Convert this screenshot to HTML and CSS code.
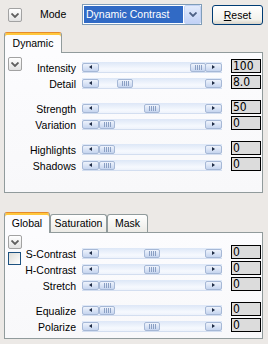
FILE: index.html
```html
<!DOCTYPE html>
<html lang="en">
<head>
    <meta charset="UTF-8">
    <meta name="viewport" content="width=device-width, initial-scale=1.0">
    <title>Dynamic Contrast</title>
    <link rel="stylesheet" href="styles.css">
</head>
<body>
    <div class="topbar">
        <span class="fold"><svg width="8" height="5" viewBox="0 0 8 5"><path d="M0.5 0.5 L4 4 L7.5 0.5" fill="none" stroke="#5f5f5f" stroke-width="1.8"/></svg></span>
        <span class="mode-label">Mode</span>
        <div class="combo">
            <span class="combo-value">Dynamic Contrast</span>
            <span class="combo-arrow"><svg width="8" height="5" viewBox="0 0 8 5"><path d="M0.5 0.5 L4 4 L7.5 0.5" fill="none" stroke="#4d6185" stroke-width="1.8"/></svg></span>
        </div>
        <span class="reset"><u>R</u>eset</span>
    </div>

    <div class="tabs">
        <div class="tab active tab-dynamic">Dynamic</div>
    </div>
    <div class="panel panel-dynamic">
        <div class="side">
            <span class="fold"><svg width="8" height="5" viewBox="0 0 8 5"><path d="M0.5 0.5 L4 4 L7.5 0.5" fill="none" stroke="#5f5f5f" stroke-width="1.8"/></svg></span>
        </div>
        <div class="rows">
            <div class="row">
                <span class="label">Intensity</span>
                <div class="slider"><span class="step left"></span><span class="track"><span class="thumb" style="left: 91px"></span></span><span class="step right"></span></div>
                <span class="value">100</span>
            </div>
            <div class="row">
                <span class="label">Detail</span>
                <div class="slider"><span class="step left"></span><span class="track"><span class="thumb" style="left: 18px"></span></span><span class="step right"></span></div>
                <span class="value">8.0</span>
            </div>
            <div class="row gap">
                <span class="label">Strength</span>
                <div class="slider"><span class="step left"></span><span class="track"><span class="thumb" style="left: 45px"></span></span><span class="step right"></span></div>
                <span class="value">50</span>
            </div>
            <div class="row">
                <span class="label">Variation</span>
                <div class="slider"><span class="step left"></span><span class="track"><span class="thumb" style="left: 0px"></span></span><span class="step right"></span></div>
                <span class="value">0</span>
            </div>
            <div class="row gap">
                <span class="label">Highlights</span>
                <div class="slider"><span class="step left"></span><span class="track"><span class="thumb" style="left: 0px"></span></span><span class="step right"></span></div>
                <span class="value">0</span>
            </div>
            <div class="row">
                <span class="label">Shadows</span>
                <div class="slider"><span class="step left"></span><span class="track"><span class="thumb" style="left: 0px"></span></span><span class="step right"></span></div>
                <span class="value">0</span>
            </div>
        </div>
    </div>

    <div class="tabs tabs-global">
        <div class="tab active tab-global">Global</div>
        <div class="tab tab-saturation">Saturation</div>
        <div class="tab tab-mask">Mask</div>
    </div>
    <div class="panel panel-global">
        <div class="side">
            <span class="fold"><svg width="8" height="5" viewBox="0 0 8 5"><path d="M0.5 0.5 L4 4 L7.5 0.5" fill="none" stroke="#5f5f5f" stroke-width="1.8"/></svg></span>
            <span class="check"></span>
        </div>
        <div class="rows">
            <div class="row">
                <span class="label">S-Contrast</span>
                <div class="slider"><span class="step left"></span><span class="track"><span class="thumb" style="left: 45px"></span></span><span class="step right"></span></div>
                <span class="value">0</span>
            </div>
            <div class="row">
                <span class="label">H-Contrast</span>
                <div class="slider"><span class="step left"></span><span class="track"><span class="thumb" style="left: 45px"></span></span><span class="step right"></span></div>
                <span class="value">0</span>
            </div>
            <div class="row">
                <span class="label">Stretch</span>
                <div class="slider"><span class="step left"></span><span class="track"><span class="thumb" style="left: 0px"></span></span><span class="step right"></span></div>
                <span class="value">0</span>
            </div>
            <div class="row gap">
                <span class="label">Equalize</span>
                <div class="slider"><span class="step left"></span><span class="track"><span class="thumb" style="left: 0px"></span></span><span class="step right"></span></div>
                <span class="value">0</span>
            </div>
            <div class="row">
                <span class="label">Polarize</span>
                <div class="slider"><span class="step left"></span><span class="track"><span class="thumb" style="left: 45px"></span></span><span class="step right"></span></div>
                <span class="value">0</span>
            </div>
        </div>
    </div>
</body>
</html>
```

FILE: styles.css
```css
body {
    margin: 0;
    background: #ece9e6;
    font-family: "Liberation Sans", Arial, sans-serif;
    font-size: 10.5px;
    color: #000;
    width: 268px;
    height: 344px;
    overflow: hidden;
}

/* top bar */
.topbar {
    display: flex;
    align-items: flex-start;
    height: 29px;
    padding-top: 4px;
}
.fold {
    box-sizing: border-box;
    width: 14px;
    height: 14px;
    border: 1px solid #a2a2a2;
    border-radius: 2px;
    background: linear-gradient(#ffffff, #e2e2e2);
    display: flex;
    align-items: center;
    justify-content: center;
}
.topbar .fold {
    margin: 4px 0 0 8px;
}
.mode-label {
    width: 42px;
    margin: 2px 0 0 18px;
    line-height: 16px;
}
.combo {
    box-sizing: border-box;
    width: 120px;
    height: 21px;
    border: 1px solid #7f9db9;
    background: #fff;
    display: flex;
}
.combo-value {
    width: 97px;
    margin: 1px 1px 1px 1px;
    padding-left: 2px;
    background: #316ac5;
    color: #fff;
    line-height: 17px;
}
.combo-arrow {
    box-sizing: border-box;
    width: 17px;
    border: 1px solid #c3d3f5;
    border-radius: 2px;
    background: linear-gradient(#e3ebfc, #c2d2f6);
    display: flex;
    align-items: center;
    justify-content: center;
}
.reset {
    box-sizing: border-box;
    width: 51px;
    height: 20px;
    margin: 1px 0 0 10px;
    border: 1px solid #003c74;
    border-radius: 3px;
    background: linear-gradient(#ffffff, #f3f2ec 75%, #d8d3c8);
    text-align: center;
    line-height: 18px;
}

/* tabs */
.tabs {
    display: flex;
    align-items: flex-end;
    height: 20px;
    padding-left: 4px;
    position: relative;
    z-index: 1;
    margin-bottom: -1px;
}
.tabs-global {
    margin-top: 19px;
    height: 21px;
}
.tab {
    box-sizing: border-box;
    height: 18px;
    border: 1px solid #919b9c;
    border-bottom: none;
    border-radius: 3px 3px 0 0;
    background: linear-gradient(#ffffff, #ecebe6);
    text-align: center;
    line-height: 17px;
}
.tab.active {
    height: 21px;
    border-top: 1px solid #e68b2c;
    box-shadow: inset 0 2px 0 #ffc73c;
    background: #fcfcfe;
    line-height: 21px;
}
.tab-dynamic { width: 58px; }
.tab-global { width: 46px; }
.tab-saturation { width: 57px; margin-bottom: 1px; height: 18px; }
.tab-mask { width: 41px; margin-bottom: 1px; height: 18px; }

/* panels */
.panel {
    box-sizing: border-box;
    width: 259px;
    margin-left: 4px;
    border: 1px solid #919b9c;
    background: linear-gradient(#fcfcfe, #f8f8fa);
    display: flex;
    padding: 0 1px 0 3px;
}
.panel-dynamic { height: 141px; }
.panel-global { height: 107px; }
.side {
    width: 14px;
    display: flex;
    flex-direction: column;
}
.panel-dynamic .side { padding-top: 4px; }
.panel-dynamic .rows { padding-top: 5px; }
.panel-global .side { padding-top: 2px; }
.panel-global .rows { padding-top: 11px; }
.check {
    box-sizing: border-box;
    width: 13px;
    height: 13px;
    margin-top: 3px;
    border: 1px solid #1c5180;
    background: linear-gradient(135deg, #dcdcd7, #ffffff);
}

/* slider rows */
.row {
    display: flex;
    height: 16px;
}
.row.gap {
    margin-top: 9px;
}
.label {
    width: 54px;
    text-align: right;
    line-height: 16px;
    padding-top: 2px;
    white-space: nowrap;
}
.slider {
    box-sizing: border-box;
    display: flex;
    align-items: center;
    width: 140px;
    height: 11px;
    margin: 4px 0 0 6px;
    background: linear-gradient(#dde7f7, #f6f9fe 70%, #edf2fb);
    border-bottom: 1px solid #d3def0;
}
.step,
.thumb {
    box-sizing: border-box;
    height: 9px;
    border: 1px solid #a6b8d6;
    border-radius: 2px;
    background: linear-gradient(#eef3fc, #c6d5ef);
}
.step {
    width: 17px;
    position: relative;
}
.step::after {
    content: "";
    position: absolute;
    top: 1px;
    left: 6px;
    border-top: 2.5px solid transparent;
    border-bottom: 2.5px solid transparent;
}
.step.left::after {
    border-right: 3px solid #1e2b44;
}
.step.right::after {
    border-left: 3px solid #1e2b44;
}
.track {
    flex: 1;
    height: 9px;
    position: relative;
}
.thumb {
    position: absolute;
    top: 0;
    width: 16px;
    background:
        repeating-linear-gradient(90deg, #8a9fc3 0 1px, transparent 1px 2px) center / 7px 5px no-repeat,
        linear-gradient(#eef3fc, #c6d5ef);
}
.value {
    box-sizing: border-box;
    width: 30px;
    height: 14px;
    margin: 1px 0 0 9px;
    border: 1px solid #000;
    background: #dcdcdc;
    padding-left: 1px;
    font-family: "Liberation Sans Narrow", "DejaVu Sans Condensed", sans-serif;
    font-size: 12px;
    line-height: 13px;
}
```
